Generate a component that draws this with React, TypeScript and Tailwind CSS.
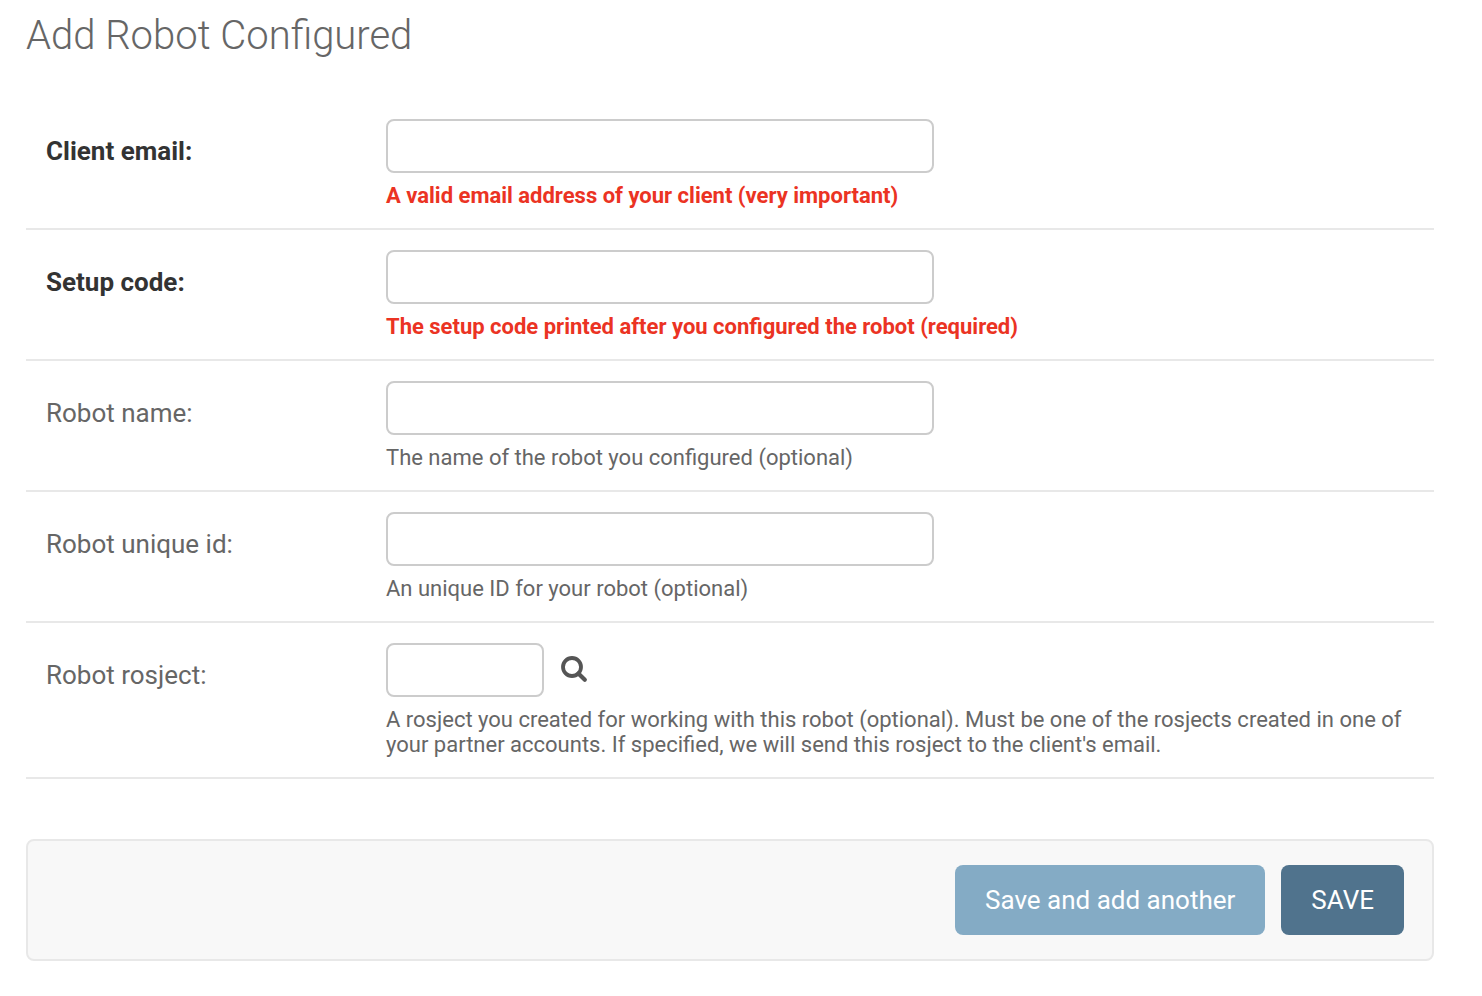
import type { ReactNode } from "react";

type FieldProps = {
  id: string;
  label: string;
  help: string;
  required?: boolean;
  children: ReactNode;
};

const inputClass =
  "block h-[54px] rounded-lg border-2 border-[#cccccc] bg-white px-2.5 text-[26px] text-[#333333] outline-none focus:border-[#999999]";

function Field({ id, label, help, required = false, children }: FieldProps) {
  return (
    <div className="flex border-b-2 border-[#e8e8e8] p-5">
      <label
        htmlFor={id}
        className={
          required
            ? "w-[340px] shrink-0 pt-4 text-[26px] leading-8 font-bold text-[#333333]"
            : "w-[340px] shrink-0 pt-4 text-[26px] leading-8 text-[#666666]"
        }
      >
        {label}
      </label>
      <div className="min-w-0 flex-1">
        {children}
        <p
          id={`${id}-help`}
          className={
            required
              ? "mt-2.5 text-[22px] leading-[25px] font-bold text-[#eb3323]"
              : "mt-2.5 text-[22px] leading-[25px] text-[#666666]"
          }
        >
          {help}
        </p>
      </div>
    </div>
  );
}

export default function App() {
  return (
    <main className="min-h-screen bg-white pr-12 pl-[26px] font-['Roboto',sans-serif]">
      <h1 className="pt-3 text-[40px] leading-[47px] font-light text-[#666666]">Add Robot Configured</h1>
      <form className="mt-10" onSubmit={(event) => event.preventDefault()}>
        <Field id="email" label="Client email:" help="A valid email address of your client (very important)" required>
          <input id="email" type="email" aria-describedby="email-help" className={`${inputClass} w-full max-w-[548px]`} />
        </Field>
        <Field id="code" label="Setup code:" help="The setup code printed after you configured the robot (required)" required>
          <input id="code" type="text" aria-describedby="code-help" className={`${inputClass} w-full max-w-[548px]`} />
        </Field>
        <Field id="name" label="Robot name:" help="The name of the robot you configured (optional)">
          <input id="name" type="text" aria-describedby="name-help" className={`${inputClass} w-full max-w-[548px]`} />
        </Field>
        <Field id="unique" label="Robot unique id:" help="An unique ID for your robot (optional)">
          <input id="unique" type="text" aria-describedby="unique-help" className={`${inputClass} w-full max-w-[548px]`} />
        </Field>
        <Field
          id="rosject"
          label="Robot rosject:"
          help="A rosject you created for working with this robot (optional). Must be one of the rosjects created in one of your partner accounts. If specified, we will send this rosject to the client's email."
        >
          <div className="flex items-center gap-4">
            <input id="rosject" type="text" aria-describedby="rosject-help" className={`${inputClass} w-[158px]`} />
            <button type="button" aria-label="Look up rosject" className="cursor-pointer">
              <svg width="28" height="28" viewBox="0 0 28 28" fill="none" stroke="#555555" aria-hidden="true">
                <circle cx="12" cy="11" r="9" strokeWidth="3.8" />
                <path d="M18.4 17.4 L24.8 23.8" strokeWidth="4.2" strokeLinecap="round" />
              </svg>
            </button>
          </div>
        </Field>
        <div className="mt-[60px] flex justify-end gap-4 rounded-lg border-2 border-[#e8e8e8] bg-[#f8f8f8] px-7 py-6">
          <button type="submit" className="h-[70px] cursor-pointer rounded-lg bg-[#84abc5] px-[30px] text-[26px] text-white">
            Save and add another
          </button>
          <button type="submit" className="h-[70px] cursor-pointer rounded-lg bg-[#50738d] px-[30px] text-[26px] text-white uppercase">
            Save
          </button>
        </div>
      </form>
    </main>
  );
}
